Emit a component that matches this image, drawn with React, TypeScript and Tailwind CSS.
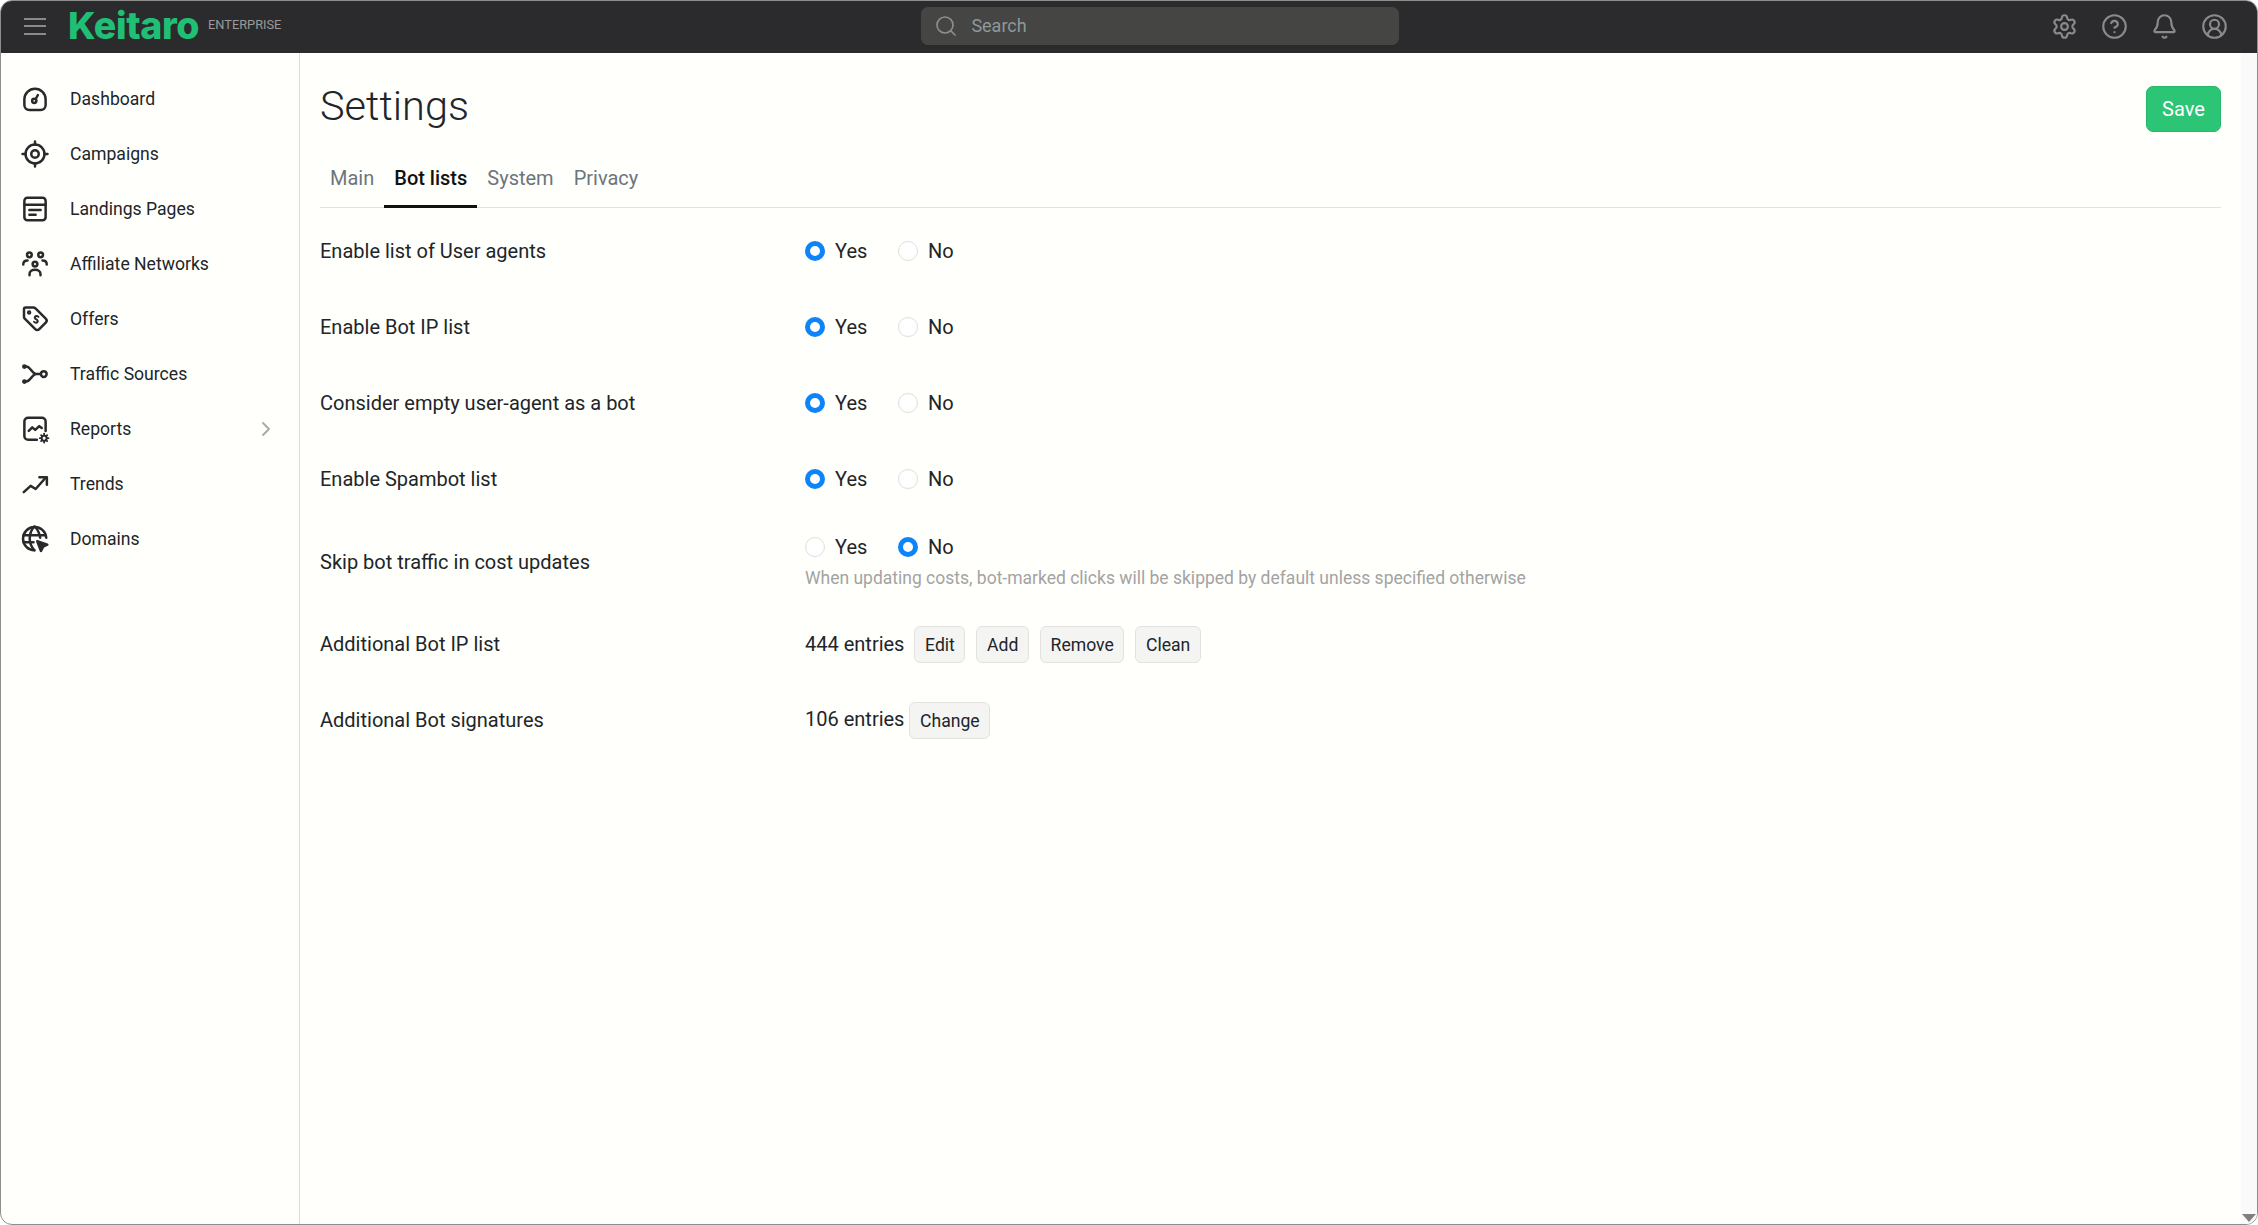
import { Bell, ChevronRight, CircleHelp, CircleUserRound, Search, Settings } from "lucide-react";
import type { ReactNode } from "react";

const Icon = ({ children }: { children: ReactNode }) => (
  <svg
    viewBox="0 0 24 24"
    className="w-[30px] h-[30px] shrink-0 text-[#2a2a2d]"
    fill="none"
    stroke="currentColor"
    strokeWidth="2"
    strokeLinecap="round"
    strokeLinejoin="round"
  >
    {children}
  </svg>
);

const navItems: { label: string; icon: ReactNode; arrow?: boolean }[] = [
  {
    label: "Dashboard",
    icon: (
      <Icon>
        <path d="M7.500 20.800h9c2.300 0 4-1.700 4-4v-4.500a8.500 8.500 0 0 0-17 0v4.500c0 2.300 1.700 4 4 4z" />
        <circle cx="11.400" cy="13.400" r="1.700" />
        <path d="M12.600 12l1.700-3.200" />
      </Icon>
    ),
  },
  {
    label: "Campaigns",
    icon: (
      <Icon>
        <circle cx="12" cy="12" r="7.600" />
        <circle cx="12" cy="12" r="3" />
        <path d="M12 2v2.400M12 19.600V22M2 12h2.400M19.600 12H22" />
      </Icon>
    ),
  },
  {
    label: "Landings Pages",
    icon: (
      <Icon>
        <rect x="3.500" y="3" width="17" height="18" rx="2.400" />
        <path d="M3.500 8.500h17M7.500 12.700h9M7.500 16.500h5" />
      </Icon>
    ),
  },
  {
    label: "Affiliate Networks",
    icon: (
      <Icon>
        <circle cx="7.500" cy="4.600" r="1.900" />
        <circle cx="16.500" cy="4.600" r="1.900" />
        <circle cx="12" cy="12" r="1.900" />
        <path d="M2.600 12.400c0-2 1.300-3.100 3.400-3.100M21.400 12.400c0-2-1.300-3.100-3.400-3.100M7.600 21v-.8c0-2.200 1.800-3.600 4.400-3.600s4.400 1.400 4.400 3.600v.8" />
      </Icon>
    ),
  },
  {
    label: "Offers",
    icon: (
      <Icon>
        <path d="M3.200 3.900v6.200c0 .7.300 1.300.8 1.800l8.200 8.200c.9.900 2.300.9 3.200 0l5.200-5.200c.9-.9.9-2.300 0-3.200L12.400 3.500c-.5-.5-1.100-.8-1.800-.8H4.600c-.8 0-1.400.6-1.400 1.200z" />
        <circle cx="7.300" cy="6.800" r=".8" />
        <path d="M14.800 10.300c-1-.9-2.300-.8-2.800 0-.5.8 0 1.500 1 2s1.500 1.200 1 2-1.800.9-2.800 0" strokeWidth="1.600" />
      </Icon>
    ),
  },
  {
    label: "Traffic Sources",
    icon: (
      <Icon>
        <circle cx="3.500" cy="6" r=".9" />
        <circle cx="3.500" cy="18" r=".9" />
        <circle cx="19" cy="12" r="2.300" />
        <path d="M3.500 6h1.500c3.500 0 4.500 6 8 6h3.700M3.500 18h1.500c3.500 0 4.500-6 8-6" />
      </Icon>
    ),
  },
  {
    label: "Reports",
    arrow: true,
    icon: (
      <Icon>
        <path d="M13.500 20.500H6.500a3 3 0 0 1-3-3V6a3 3 0 0 1 3-3h11a3 3 0 0 1 3 3v7.500" />
        <path d="M7 13.500l2.800-2.800 2.400 2 3.200-3 2 1.500" />
        <circle cx="19.300" cy="19.300" r="2" fill="#fffffc" strokeWidth="1.500" />
        <path d="M19.300 15.800v1.300M19.300 21.500v1.300M15.900 19.300h1.300M21.400 19.300h1.300M16.900 16.900l.9.900M20.800 20.800l.9.900M21.700 16.900l-.9.900M17.800 20.800l-.9.900" strokeWidth="1.500" />
      </Icon>
    ),
  },
  {
    label: "Trends",
    icon: (
      <Icon>
        <path d="M3 18.500l5.500-5 4 2.500 8-9" />
        <path d="M15.500 6.500h6v6" />
      </Icon>
    ),
  },
  {
    label: "Domains",
    icon: (
      <Icon>
        <path d="M11.500 21A9.300 9.300 0 1 1 21 11" />
        <path d="M2.800 9h17.500M2.800 14.500h8M11.500 2c-5 5.500-5 13.500 0 19M11.800 2c2.800 3 4 5.800 4.300 9" />
        <path d="M13.800 13.800l8 2.800-3.300 1.600-1.700 3.400z" fill="currentColor" />
      </Icon>
    ),
  },
];

const Radio = ({ label, checked }: { label: string; checked?: boolean }) => (
  <div className="flex items-center gap-[10px]">
    {checked ? (
      <span className="w-5 h-5 rounded-full border-[5.5px] border-[#0d85f8] bg-white" />
    ) : (
      <span className="w-5 h-5 rounded-full border border-[#dedede] bg-white" />
    )}
    <span>{label}</span>
  </div>
);

const YesNo = ({ no }: { no?: boolean }) => (
  <div className="flex items-center h-[30px] w-[300px]">
    <div className="w-[93px]">
      <Radio label="Yes" checked={!no} />
    </div>
    <Radio label="No" checked={no} />
  </div>
);

const Row = ({ label, children, tall }: { label: string; children: ReactNode; tall?: boolean }) => (
  <div className={`flex items-center ${tall ? "h-[89px]" : "h-[76px]"}`}>
    <div className="w-[485px] shrink-0">{label}</div>
    <div>{children}</div>
  </div>
);

const SmallButton = ({ children }: { children: ReactNode }) => (
  <button className="h-[37px] px-[9.6px] pt-[2px] rounded-[6px] border border-[#e2e2e0] bg-[#f4f4f2] text-[17.6px] text-[#212529]">
    {children}
  </button>
);

const App = () => {
  return (
    <div className="w-[2258px] h-[1225px] bg-white font-['Roboto',sans-serif]">
      <div className="flex flex-col w-full h-full overflow-hidden rounded-[12px] border border-[#8e8e8e] bg-[#fffffc] text-[20px] text-[#212529]">
        <header className="flex items-center h-[52px] shrink-0 pb-[2px] bg-[#2b2b2e] text-[#8a8a8a]">
          <div className="flex flex-col gap-[5.5px] w-[22px] ml-[23px]">
            <span className="h-[2px] bg-[#8a8a8a]" />
            <span className="h-[2px] bg-[#8a8a8a]" />
            <span className="h-[2px] bg-[#8a8a8a]" />
          </div>
          <span className="ml-[22px] font-['Inter',sans-serif] font-extrabold text-[37.5px] leading-none text-[#20bf75] tracking-[-0.4px]">
            Keitaro
          </span>
          <span className="ml-[9px] mb-[2px] text-[12.8px] text-[#9a9a9a]">ENTERPRISE</span>
          <div className="flex items-center w-[478px] h-[38px] ml-[640px] pl-[13px] rounded-[7px] bg-[#454543]">
            <Search size={24} strokeWidth={1.7} className="text-[#8d8d8b]" />
            <span className="ml-[13px] mb-[1px] text-[18px] text-[#8e989c]">Search</span>
          </div>
          <div className="ml-auto mr-[29px] flex items-center gap-[23px]">
            <Settings size={27} strokeWidth={1.9} />
            <CircleHelp size={27} strokeWidth={1.9} />
            <Bell size={27} strokeWidth={1.9} />
            <CircleUserRound size={27} strokeWidth={1.9} />
          </div>
        </header>
        <div className="flex flex-1 min-h-0">
          <aside className="w-[299px] shrink-0 border-r border-r-[#dcdcdc] pt-[18px] text-[17.6px]">
            {navItems.map((item) => (
              <div key={item.label} className="flex items-center h-[55px] pl-[19px] pr-[21px]">
                {item.icon}
                <span className="ml-[20px] pt-[1px]">{item.label}</span>
                {item.arrow && <ChevronRight size={24} strokeWidth={1.8} className="ml-auto text-[#a8a8a8]" />}
              </div>
            ))}
          </aside>
          <main className="flex-1 pl-[20px] pr-[20px]">
            <div className="flex justify-between items-start pt-[33px] h-[103px]">
              <h1 className="font-light text-[41.5px] leading-[46px] -mt-[3px] text-[#212529]">Settings</h1>
              <button className="h-[46px] w-[75px] rounded-[7px] border border-[#25b96c] bg-[#2bc575] text-white text-[20px]">
                Save
              </button>
            </div>
            <div className="flex h-[52px] border-b border-b-[#e2e2e0] text-[#6c757d]">
              <div className="h-[52px] pt-[7px] leading-[30px] px-[10px]">Main</div>
              <div className="h-[52px] pt-[7px] leading-[30px] px-[10px] font-medium text-[#111] border-b-[3px] border-b-[#111]">
                Bot lists
              </div>
              <div className="h-[52px] pt-[7px] leading-[30px] px-[10px]">System</div>
              <div className="h-[52px] pt-[7px] leading-[30px] px-[10px]">Privacy</div>
            </div>
            <div className="pt-[5px]">
              <Row label="Enable list of User agents">
                <YesNo />
              </Row>
              <Row label="Enable Bot IP list">
                <YesNo />
              </Row>
              <Row label="Consider empty user-agent as a bot">
                <YesNo />
              </Row>
              <Row label="Enable Spambot list">
                <YesNo />
              </Row>
              <Row label="Skip bot traffic in cost updates" tall>
                <YesNo no />
                <div className="h-[30px] pt-[4px] flex items-center text-[17.5px] text-[#a3a3a3]">
                  When updating costs, bot-marked clicks will be skipped by default unless specified otherwise
                </div>
              </Row>
              <Row label="Additional Bot IP list">
                <div className="flex items-center gap-[11px]">
                  <span className="mr-[-1px]">444 entries</span>
                  <SmallButton>Edit</SmallButton>
                  <SmallButton>Add</SmallButton>
                  <SmallButton>Remove</SmallButton>
                  <SmallButton>Clean</SmallButton>
                </div>
              </Row>
              <Row label="Additional Bot signatures">
                <div className="flex items-center gap-[5px]">
                  <span className="-mt-[2px]">106 entries</span>
                  <SmallButton>Change</SmallButton>
                </div>
              </Row>
            </div>
          </main>
          <div className="relative w-[16px] shrink-0 bg-[#fafafa]">
            <svg viewBox="0 0 14 8" className="absolute bottom-[2px] right-[1px] w-[14px] h-[8px] text-[#808080]" fill="currentColor">
              <path d="M0 0h14L7 8z" />
            </svg>
          </div>
        </div>
      </div>
    </div>
  );
};

export default App;
